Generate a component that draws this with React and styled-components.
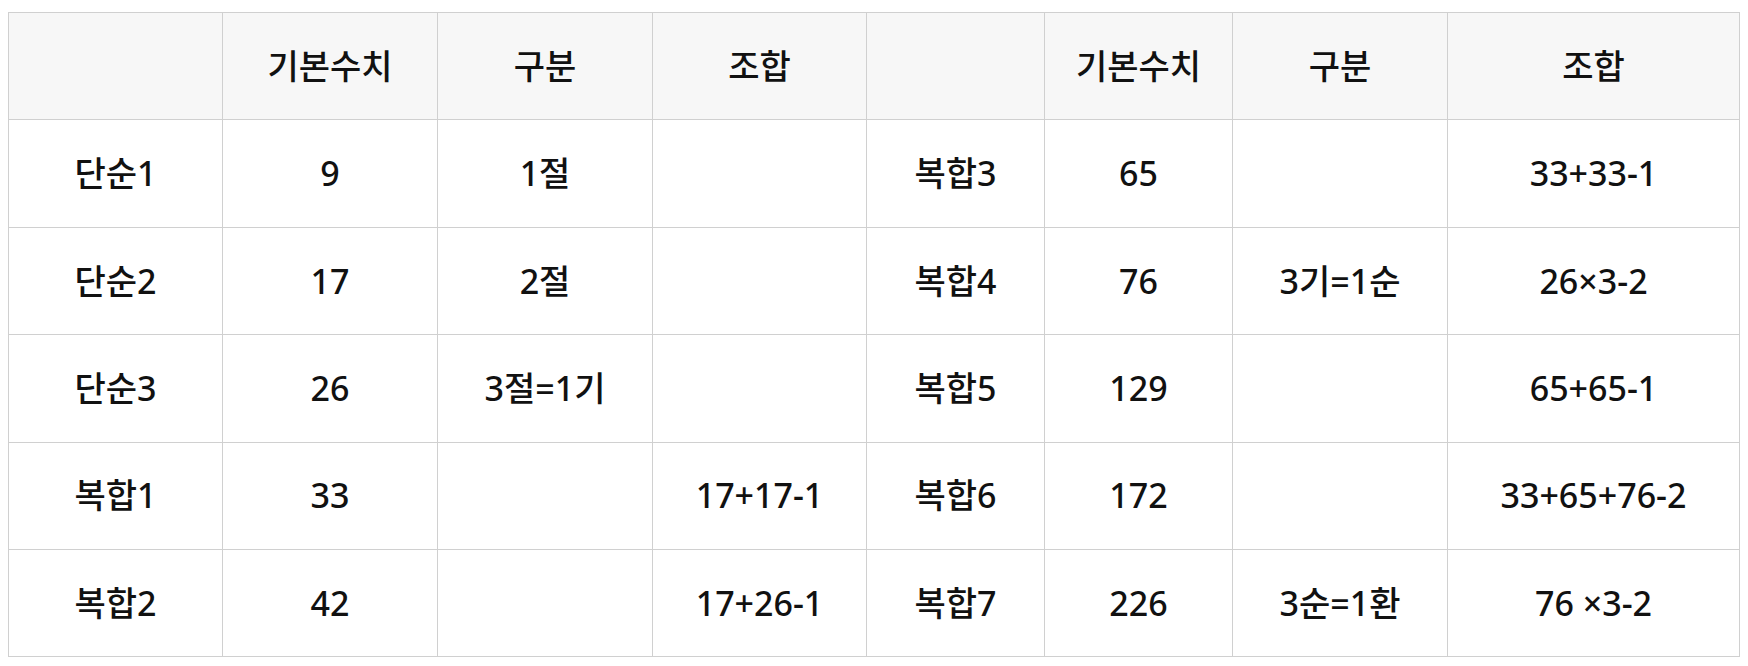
import React from "react";
import styled, { createGlobalStyle } from "styled-components";

const Global = createGlobalStyle`
  html, body { margin: 0; padding: 0; background: #ffffff; }
  body { font-family: "Noto Sans", "Noto Sans CJK KR", sans-serif; color: #111; }
`;

const Page = styled.div`
  padding: 12px 9px 0 8px;
`;

const Table = styled.table`
  width: 100%;
  border-collapse: collapse;
  table-layout: fixed;
`;

const HeadCell = styled.th`
  height: 106.4px;
  padding: 0;
  background: #f7f7f7;
  border: 1px solid #d0d0d0;
  font-weight: 500;
  font-size: 34px;
  line-height: 1.2;
  text-align: center;
  vertical-align: middle;
  color: #111;
`;

const Cell = styled.td`
  height: 106.4px;
  padding: 0;
  background: #ffffff;
  border: 1px solid #d0d0d0;
  font-weight: 500;
  font-size: 34px;
  line-height: 1.2;
  text-align: center;
  vertical-align: middle;
  color: #111;
  white-space: nowrap;
`;

const widths = [214, 215, 215, 214, 178, 188, 215, 292];
const headers = ["", "기본수치", "구분", "조합", "", "기본수치", "구분", "조합"];
const rows = [
  ["단순1", "9", "1절", "", "복합3", "65", "", "33+33-1"],
  ["단순2", "17", "2절", "", "복합4", "76", "3기=1순", "26×3-2"],
  ["단순3", "26", "3절=1기", "", "복합5", "129", "", "65+65-1"],
  ["복합1", "33", "", "17+17-1", "복합6", "172", "", "33+65+76-2"],
  ["복합2", "42", "", "17+26-1", "복합7", "226", "3순=1환", "76 ×3-2"],
];

export default function App() {
  return (
    <Page>
      <Global />
      <Table>
        <colgroup>
          {widths.map((w, i) => (
            <col key={i} style={{ width: w }} />
          ))}
        </colgroup>
        <thead>
          <tr>
            {headers.map((h, i) => (
              <HeadCell key={i}>{h}</HeadCell>
            ))}
          </tr>
        </thead>
        <tbody>
          {rows.map((r, i) => (
            <tr key={i}>
              {r.map((c, j) => (
                <Cell key={j}>{c}</Cell>
              ))}
            </tr>
          ))}
        </tbody>
      </Table>
    </Page>
  );
}
